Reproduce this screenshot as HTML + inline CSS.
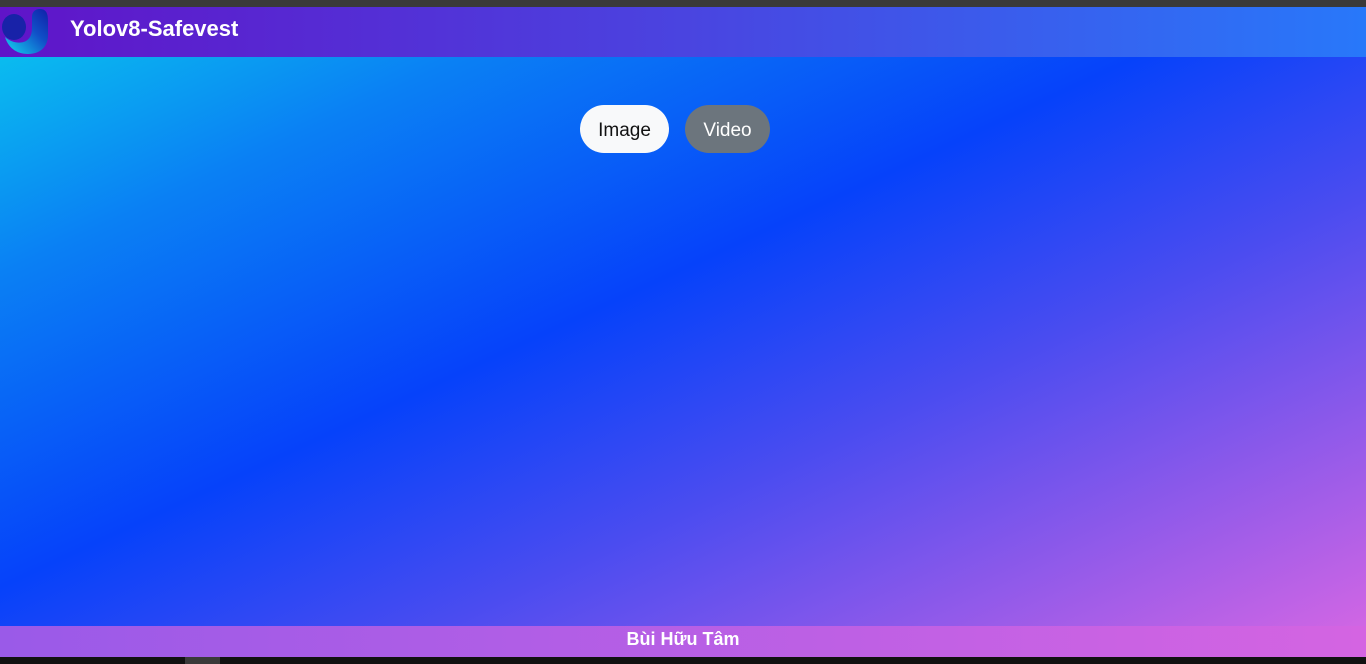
<!DOCTYPE html>
<html><head><meta charset="utf-8"><style>
*{margin:0;padding:0;box-sizing:border-box}
body{width:1366px;height:664px;overflow:hidden;background:#111;font-family:"Liberation Sans",sans-serif;position:relative}
.top{position:absolute;left:0;top:0;width:1366px;height:7px;background:#3a3a3a}
.hdr{position:absolute;left:0;top:7px;width:1366px;height:50px;background:linear-gradient(90deg,#6014c8,#4a44e0 50%,#2878fa)}
.hdr h1{position:absolute;left:70px;top:9px;color:#fff;font-size:22px;font-weight:bold}
.main{position:absolute;left:0;top:57px;width:1366px;height:569px;background:linear-gradient(155deg,#0abcef 0%,#0a80f4 18%,#0642fa 44%,#4a4cf0 64%,#d066e4 100%)}
.btn{position:absolute;top:48px;height:48px;border-radius:24px;font-size:19px;line-height:52px;text-align:center}
.b1{left:580px;width:89px;background:#f8f9fa;color:#111}
.b2{left:685px;width:85px;background:#6c757d;color:#fff}
.ftr{position:absolute;left:0;top:626px;width:1366px;height:31px;background:linear-gradient(90deg,#9a5ae8,#d464e2);color:#fff;font-weight:bold;font-size:18px;text-align:center;line-height:27px}
.gb{position:absolute;left:185px;top:657px;width:35px;height:7px;background:#3a3a3a}
</style></head><body>
<div class="top"></div>
<div class="hdr">
<svg width="50" height="50" style="position:absolute;left:0;top:0" viewBox="0 0 50 50">
<defs><linearGradient id="g" x1="0" y1="1" x2="1" y2="0"><stop offset="0" stop-color="#14d8f0"/><stop offset="0.6" stop-color="#1050c8"/><stop offset="1" stop-color="#1020a8"/></linearGradient></defs>
<path d="M40 2 C46 2 48 6 48 14 L48 28 C48 40 40 47 28 47 C16 47 8 40 5 30 C12 36 20 37 26 34 C31 31 32 26 32 20 L32 10 C32 5 35 2 40 2 Z" fill="url(#g)"/>
<ellipse cx="14" cy="20" rx="12" ry="13" fill="#1822a8"/>
</svg>
<h1>Yolov8-Safevest</h1></div>
<div class="main"><div class="btn b1">Image</div><div class="btn b2">Video</div></div>
<div class="ftr">Bùi Hữu Tâm</div>
<div class="gb"></div>
</body></html>
